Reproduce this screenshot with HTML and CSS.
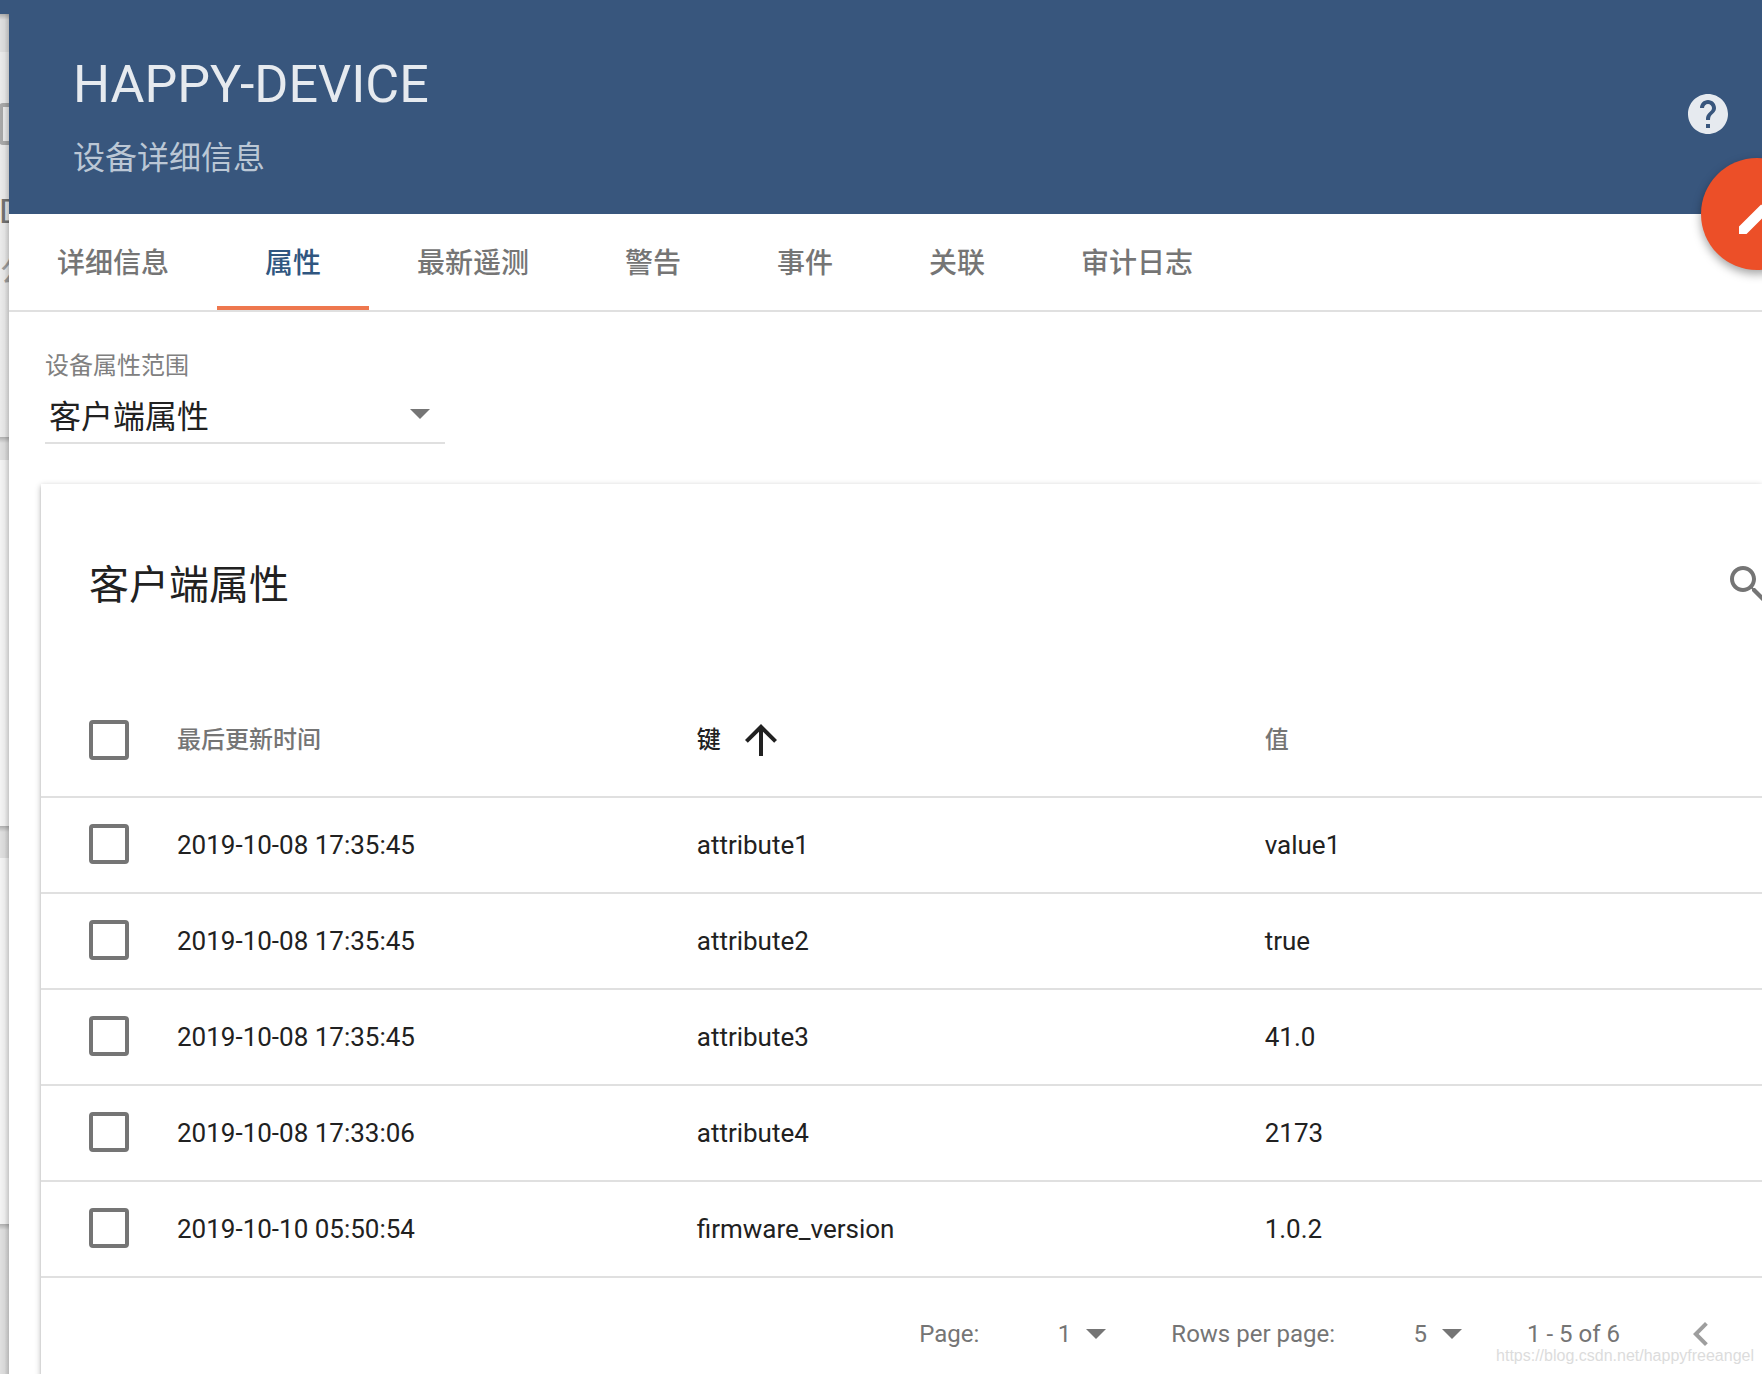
FILE: index.html
```html
<!DOCTYPE html>
<html lang="zh-CN">
<head>
<meta charset="utf-8">
<title>HAPPY-DEVICE</title>
<link rel="stylesheet" href="styles.css">
</head>
<body>
<div class="app">
  <aside class="backdrop" aria-hidden="true">
    <div class="backdrop-bar"></div>
    <div class="backdrop-gap toolbar-gap"></div>
    <div class="backdrop-card device-card">
      <div class="ghost-box"></div>
      <div class="ghost-title">D</div>
      <div class="ghost-text">公</div>
    </div>
    <div class="backdrop-gap small-gap"></div>
    <div class="backdrop-card pale-card"></div>
    <div class="backdrop-gap wide-gap"></div>
    <div class="backdrop-card pale-card"></div>
    <div class="backdrop-gap rest-gap"></div>
  </aside>

  <main class="details">
    <header class="details-header">
      <div>
        <h1 class="details-title">HAPPY-DEVICE</h1>
        <p class="details-subtitle">设备详细信息</p>
      </div>
      <button class="icon-button help-button" type="button" aria-label="Help">
        <svg class="icon" viewBox="0 0 24 24"><path d="M12 2C6.48 2 2 6.48 2 12s4.480 10 10 10 10-4.480 10-10S17.520 2 12 2zm1 17h-2v-2h2v2zm2.070-7.750l-.9.920C13.450 12.900 13 13.500 13 15h-2v-.5c0-1.100.450-2.100 1.170-2.830l1.240-1.260c.370-.360.590-.860.590-1.410 0-1.100-.9-2-2-2s-2 .9-2 2H8c0-2.210 1.790-4 4-4s4 1.790 4 4c0 .880-.360 1.680-.930 2.250z"/></svg>
      </button>
      <button class="edit-button" type="button" aria-label="Edit">
        <svg class="icon" viewBox="0 0 24 24"><path d="M3 17.250V21h3.750L17.810 9.940l-3.750-3.750L3 17.250zM20.710 7.040c.390-.390.390-1.020 0-1.410l-2.340-2.340c-.390-.390-1.020-.390-1.410 0l-1.830 1.830 3.750 3.750 1.830-1.830z"/></svg>
      </button>
    </header>

    <nav class="tabs">
      <button class="tab" type="button">详细信息</button>
      <button class="tab tab-active" type="button">属性</button>
      <button class="tab" type="button">最新遥测</button>
      <button class="tab" type="button">警告</button>
      <button class="tab" type="button">事件</button>
      <button class="tab" type="button">关联</button>
      <button class="tab" type="button">审计日志</button>
    </nav>

    <div class="scope">
      <label class="scope-label" for="scope">设备属性范围</label>
      <div class="scope-field">
        <select class="scope-select" id="scope"><option>客户端属性</option></select>
        <span class="caret"></span>
      </div>
    </div>

    <section class="card">
      <div class="card-toolbar">
        <h2 class="card-title">客户端属性</h2>
        <button class="icon-button search-button" type="button" aria-label="Search">
          <svg class="icon" viewBox="0 0 24 24"><path d="M15.500 14h-.790l-.280-.270C15.410 12.590 16 11.110 16 9.500 16 5.910 13.090 3 9.500 3S3 5.910 3 9.500 5.910 16 9.500 16c1.610 0 3.090-.590 4.230-1.570l.270.280v.790l5 4.990L20.490 19l-4.990-5zm-6 0C7.010 14 5 11.990 5 9.500S7.010 5 9.500 5 14 7.010 14 9.500 11.990 14 9.500 14z"/></svg>
        </button>
      </div>

      <table class="attributes">
        <thead>
          <tr>
            <th class="col-check"><input class="check" type="checkbox" aria-label="Select all"></th>
            <th class="col-time">最后更新时间</th>
            <th class="col-key"><span class="sorted">键 <svg class="icon" viewBox="0 0 24 24"><path d="M4 12l1.410 1.410L11 7.830V20h2V7.830l5.580 5.590L20 12l-8-8-8 8z"/></svg></span></th>
            <th>值</th>
          </tr>
        </thead>
        <tbody>
          <tr><td><input class="check" type="checkbox" aria-label="attribute1"></td><td>2019-10-08 17:35:45</td><td>attribute1</td><td>value1</td></tr>
          <tr><td><input class="check" type="checkbox" aria-label="attribute2"></td><td>2019-10-08 17:35:45</td><td>attribute2</td><td>true</td></tr>
          <tr><td><input class="check" type="checkbox" aria-label="attribute3"></td><td>2019-10-08 17:35:45</td><td>attribute3</td><td>41.0</td></tr>
          <tr><td><input class="check" type="checkbox" aria-label="attribute4"></td><td>2019-10-08 17:33:06</td><td>attribute4</td><td>2173</td></tr>
          <tr><td><input class="check" type="checkbox" aria-label="firmware_version"></td><td>2019-10-10 05:50:54</td><td>firmware_version</td><td>1.0.2</td></tr>
        </tbody>
      </table>

      <div class="pager">
        <label for="page">Page:</label>
        <div class="pager-field">
          <select class="pager-select" id="page"><option>1</option></select>
          <span class="caret"></span>
        </div>
        <label for="rows">Rows per page:</label>
        <div class="pager-field">
          <select class="pager-select" id="rows"><option>5</option></select>
          <span class="caret"></span>
        </div>
        <span class="pager-range">1 - 5 of 6</span>
        <button class="icon-button previous-button" type="button" aria-label="Previous page">
          <svg class="icon" viewBox="0 0 24 24"><path d="M15.410 7.410L14 6l-6 6 6 6 1.410-1.410L10.830 12z"/></svg>
        </button>
      </div>
    </section>
  </main>
  <div class="watermark">https://blog.csdn.net/happyfreeangel</div>
</div>
</body>
</html>
```

FILE: styles.css
```css
* {
  box-sizing: border-box;
}

body {
  margin: 0;
  background: #fff;
  color: #212121;
  font-family: Roboto, "Noto Sans CJK SC", sans-serif;
  font-size: 26px;
}

button,
select {
  margin: 0;
  padding: 0;
  border: 0;
  background: none;
  color: inherit;
  font: inherit;
}

.app {
  position: relative;
  display: grid;
  grid-template-columns: 9px minmax(0, 1fr);
  height: 100vh;
  overflow: hidden;
}

/* Sliver of the page behind the drawer */
.backdrop {
  position: relative;
  display: flex;
  flex-direction: column;
  overflow: hidden;
  background: #e5e5e5;
}

.backdrop::after {
  content: "";
  position: absolute;
  inset: 14px 0 0;
  background: linear-gradient(to right, rgba(0, 0, 0, 0.02), rgba(0, 0, 0, 0.06) 50%, rgba(0, 0, 0, 0.2));
}

.backdrop-bar {
  flex: 0 0 14px;
  background: #38567d;
}

.backdrop-gap {
  flex: none;
  background: linear-gradient(#b4b4b4, #e4e4e4 6px);
}

.toolbar-gap {
  height: 38px;
}

.small-gap {
  height: 23px;
}

.wide-gap {
  height: 32px;
}

.rest-gap {
  flex: 1;
}

.backdrop-card {
  flex: none;
}

.device-card {
  height: 385px;
  padding-top: 51px;
  background: #f0f0f0;
}

.pale-card {
  height: 366px;
  background: #f9f9f9;
}

.ghost-box {
  width: 42px;
  height: 42px;
  margin-left: -1px;
  border: 4px solid #acacac;
  border-radius: 4px;
}

.ghost-title {
  margin-top: 46px;
  margin-left: -1px;
  color: #757575;
  font-size: 34px;
  line-height: 40px;
}

.ghost-text {
  margin-top: 20px;
  color: #a0a0a0;
  font-size: 32px;
  line-height: 40px;
}

.details {
  background: #fff;
}

.details-header {
  position: relative;
  display: flex;
  justify-content: space-between;
  height: 214px;
  padding: 53px 30px 0 64px;
  background: #38567d;
  color: #e6eaef;
}

.details-title {
  margin: 0;
  font-size: 52px;
  font-weight: 400;
  line-height: 64px;
}

.details-subtitle {
  margin: 20px 0 0;
  color: #bbc7d5;
  font-size: 32px;
  line-height: 42px;
}

.icon {
  display: block;
  flex: none;
  width: 48px;
  height: 48px;
  fill: currentColor;
}

.icon-button {
  flex: none;
  width: 48px;
  height: 48px;
  color: #757575;
}

.help-button {
  margin-top: 37px;
  color: inherit;
}

/* Floating button hangs over the header's lower edge */
.edit-button {
  position: absolute;
  right: -51px;
  bottom: -56px;
  display: flex;
  align-items: center;
  justify-content: center;
  width: 112px;
  height: 112px;
  padding-top: 4px;
  border-radius: 50%;
  background: #ec4f28;
  box-shadow: 0 4px 10px rgba(0, 0, 0, 0.36);
  color: #fff;
}

.tabs {
  display: flex;
  height: 98px;
  border-bottom: 2px solid #e0e0e0;
}

.tab {
  padding: 8px 48px 0;
  border-bottom: 4px solid transparent;
  color: #757575;
  font-size: 28px;
  font-weight: 500;
  line-height: 40px;
}

.tab-active {
  border-bottom-color: #ee774e;
  color: #305680;
}

.scope {
  width: 400px;
  margin: 38px 0 0 36px;
}

.scope-label {
  display: block;
  color: #808080;
  font-size: 24px;
  line-height: 32px;
}

.scope-field {
  display: flex;
  align-items: center;
  height: 62px;
  padding: 4px 15px 0 0;
  border-bottom: 2px solid #e0e0e0;
}

.scope-select {
  flex: 1;
  height: 48px;
  padding: 6px 0 0 4px;
  appearance: none;
  font-size: 32px;
}

.caret {
  flex: none;
  border: 10px solid transparent;
  border-top-color: #757575;
  border-bottom: 0;
}

.card {
  height: 900px;
  margin: 40px 0 0 32px;
  background: #fff;
  box-shadow: 0 2px 6px rgba(0, 0, 0, 0.3), 0 2px 2px rgba(0, 0, 0, 0.1);
}

.card-toolbar {
  display: flex;
  align-items: center;
  justify-content: space-between;
  height: 200px;
  padding-left: 48px;
}

.card-title {
  margin: 0;
  padding-top: 4px;
  font-size: 40px;
  font-weight: 400;
  line-height: 48px;
}

.search-button {
  margin-right: -10px;
}

.attributes {
  width: 100%;
  border-collapse: separate;
  border-spacing: 0;
  table-layout: fixed;
}

.attributes th,
.attributes td {
  height: 96px;
  padding: 0;
  border-bottom: 2px solid #e0e0e0;
  text-align: left;
  vertical-align: middle;
}

.attributes th {
  height: 114px;
  padding: 36px 0;
  color: #757575;
  font-size: 24px;
  font-weight: 500;
  line-height: 36px;
}

.attributes .col-check {
  width: 136px;
}

.attributes .col-time {
  width: 30.2%;
}

.attributes .col-key {
  width: 33%;
}

.sorted {
  display: flex;
  align-items: center;
  gap: 16px;
  height: 40px;
  color: #212121;
}

.check {
  display: block;
  width: 40px;
  height: 40px;
  margin: 0 0 0 48px;
  appearance: none;
  border: 4px solid #757575;
  border-radius: 4px;
}

.attributes td .check {
  margin-bottom: 2px;
}

.pager {
  display: flex;
  align-items: center;
  justify-content: flex-end;
  height: 112px;
  padding-right: 37px;
  color: #757575;
  font-size: 24px;
}

.pager-field {
  display: flex;
  align-items: center;
  width: 127px;
  margin-right: 65px;
}

.pager-select {
  width: 107px;
  height: 40px;
  padding-right: 15px;
  appearance: none;
  text-align: right;
  text-align-last: right;
}

.pager-range {
  margin-right: 57px;
}

.pager .previous-button {
  color: #9e9e9e;
}

/* Credit line over the lower right corner */
.watermark {
  position: absolute;
  right: 8px;
  bottom: 8px;
  color: #dcdcdc;
  font-family: "Liberation Sans", sans-serif;
  font-size: 16px;
  line-height: 20px;
}
```
